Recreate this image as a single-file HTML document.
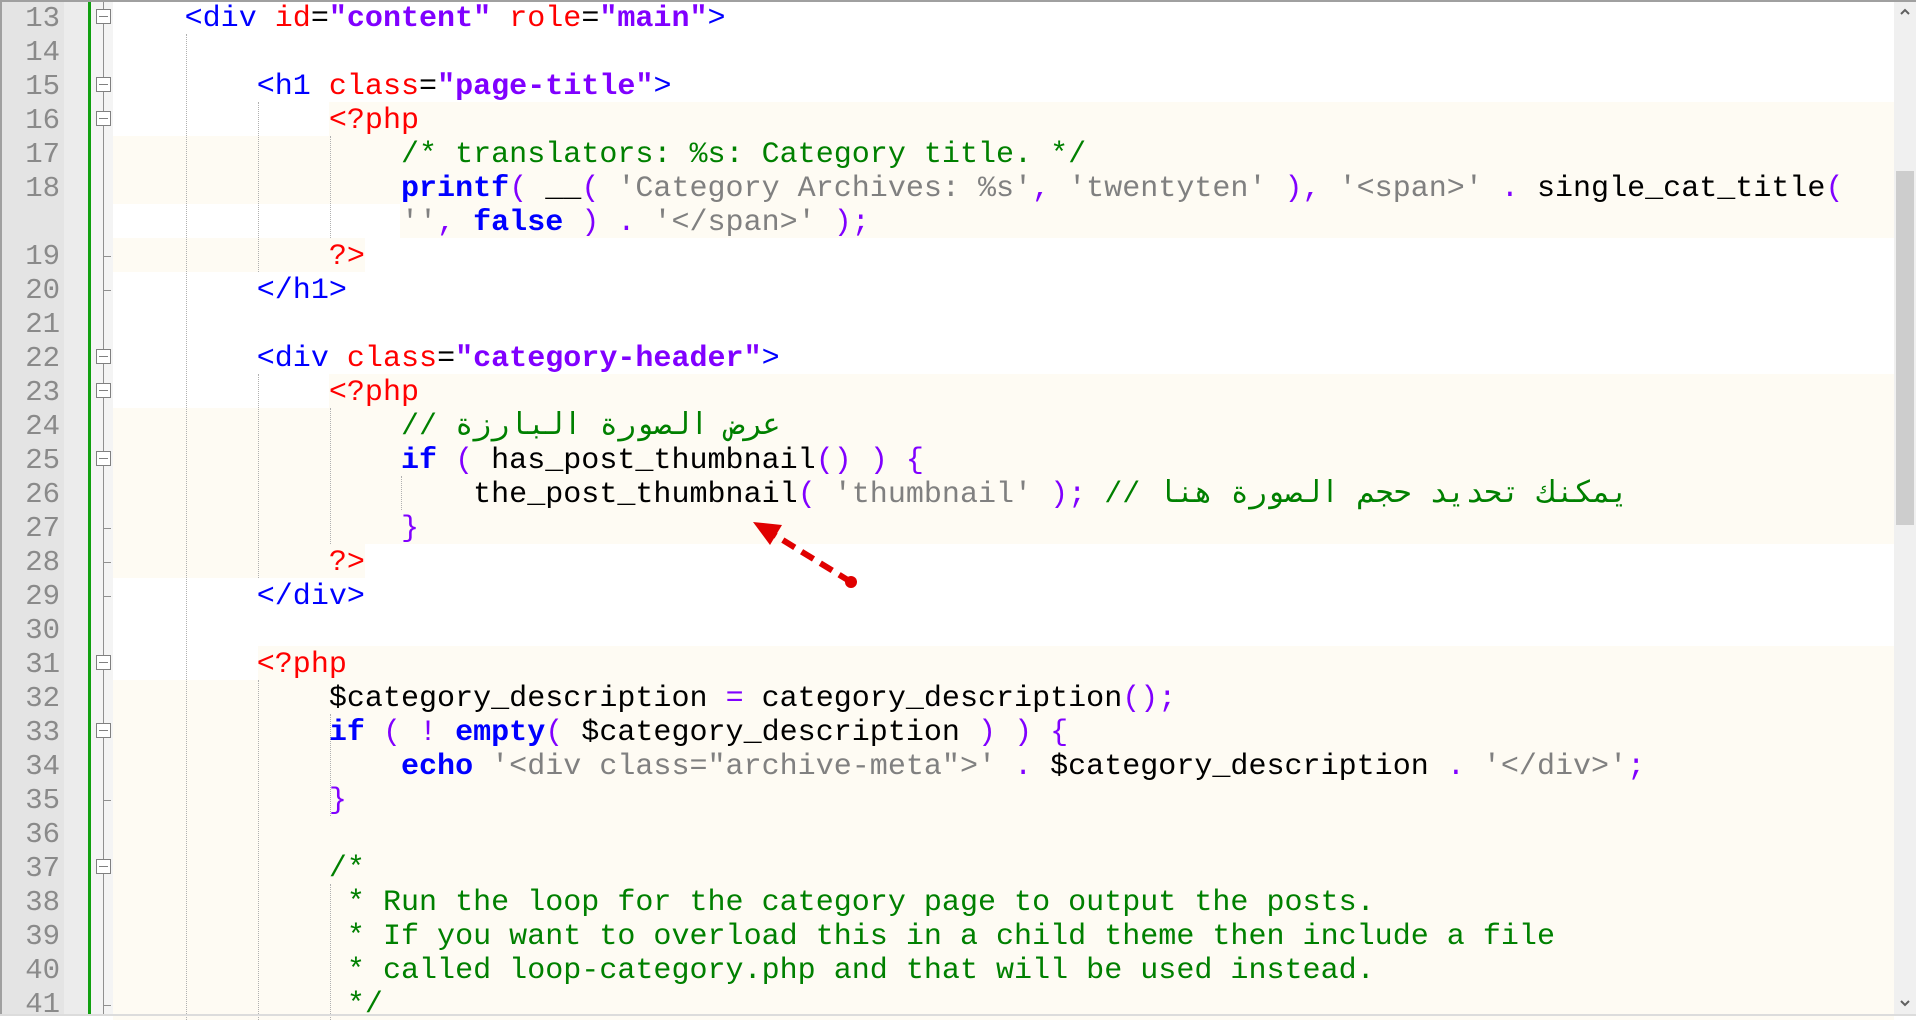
<!DOCTYPE html>
<html><head><meta charset="utf-8"><style>
*{margin:0;padding:0;box-sizing:border-box}
body{width:1916px;height:1016px;overflow:hidden;background:#fff;position:relative;font-family:"Liberation Mono","DejaVu Sans Mono",monospace}
.ln{position:absolute;left:0;top:0;width:64px;height:1016px;background:#e4e4e4}
.ln2{position:absolute;left:64px;top:0;width:24px;height:1016px;background:#ececec}
.gb{position:absolute;left:88px;top:0;width:3px;height:1016px;background:#10a010}
.fm{position:absolute;left:91px;top:0;width:22px;height:1016px;background:#f4f4f4}
.fl{position:absolute;left:103px;top:0;width:1px;height:1016px;background:#909090}
.num{position:absolute;left:0;width:60px;text-align:right;font-size:29px;line-height:34px;color:#8a8a8a;margin-top:2px}
.bg{position:absolute;height:34px;background:#fefbf3}
.row{position:absolute;left:112.5px;white-space:pre;font-size:30.05px;line-height:34px;color:#000;margin-top:2px}
.g{position:absolute;width:0;border-left:1px dotted #b0b0b0;height:34px}
.fb{position:absolute;left:96px;width:15px;height:15px;border:1px solid #808080;background:#fff}
.fb:after{content:"";position:absolute;left:2px;right:2px;top:6px;height:1px;background:#808080}
.fe{position:absolute;left:103px;width:8px;height:1px;background:#909090}
.t{color:#0000ff}.a{color:#ff0000}.v{color:#8000ff;font-weight:bold}.p{color:#ff0000}.c{color:#008000}.s{color:#808080}.k{color:#0000ff;font-weight:bold}.o{color:#8000ff}
</style></head><body>
<div class="ln"></div><div class="ln2"></div><div class="gb"></div><div class="fm"></div><div class="fl"></div>

<div class="bg" style="top:102px;left:329px;width:1565px"></div>
<div class="bg" style="top:136px;left:113px;width:1781px;height:68px"></div>
<div class="bg" style="top:204px;left:400px;width:1494px"></div>
<div class="bg" style="top:238px;left:113px;width:252px"></div>
<div class="bg" style="top:374px;left:329px;width:1565px"></div>
<div class="bg" style="top:408px;left:113px;width:1781px;height:136px"></div>
<div class="bg" style="top:544px;left:113px;width:252px"></div>
<div class="bg" style="top:646px;left:258px;width:1636px"></div>
<div class="bg" style="top:680px;left:113px;width:1781px;height:340px"></div>

<div class="g" style="left:186px;top:34px;height:986px"></div>
<div class="g" style="left:258px;top:102px;height:170px"></div>
<div class="g" style="left:258px;top:374px;height:204px"></div>
<div class="g" style="left:258px;top:680px;height:340px"></div>
<div class="g" style="left:330px;top:136px;height:102px"></div>
<div class="g" style="left:330px;top:408px;height:136px"></div>
<div class="g" style="left:330px;top:714px;height:102px"></div>
<div class="g" style="left:330px;top:884px;height:136px"></div>
<div class="g" style="left:401px;top:476px;height:34px"></div>

<div class="fb" style="top:9px"></div><div class="fb" style="top:77px"></div><div class="fb" style="top:111px"></div>
<div class="fb" style="top:349px"></div><div class="fb" style="top:383px"></div><div class="fb" style="top:451px"></div>
<div class="fb" style="top:655px"></div><div class="fb" style="top:723px"></div><div class="fb" style="top:859px"></div>
<div class="fe" style="top:256px"></div><div class="fe" style="top:290px"></div><div class="fe" style="top:528px"></div>
<div class="fe" style="top:562px"></div><div class="fe" style="top:596px"></div><div class="fe" style="top:800px"></div><div class="fe" style="top:1005px"></div>

<div class="num" style="top:0">13</div><div class="num" style="top:34px">14</div><div class="num" style="top:68px">15</div>
<div class="num" style="top:102px">16</div><div class="num" style="top:136px">17</div><div class="num" style="top:170px">18</div>
<div class="num" style="top:238px">19</div><div class="num" style="top:272px">20</div><div class="num" style="top:306px">21</div>
<div class="num" style="top:340px">22</div><div class="num" style="top:374px">23</div><div class="num" style="top:408px">24</div>
<div class="num" style="top:442px">25</div><div class="num" style="top:476px">26</div><div class="num" style="top:510px">27</div>
<div class="num" style="top:544px">28</div><div class="num" style="top:578px">29</div><div class="num" style="top:612px">30</div>
<div class="num" style="top:646px">31</div><div class="num" style="top:680px">32</div><div class="num" style="top:714px">33</div>
<div class="num" style="top:748px">34</div><div class="num" style="top:782px">35</div><div class="num" style="top:816px">36</div>
<div class="num" style="top:850px">37</div><div class="num" style="top:884px">38</div><div class="num" style="top:918px">39</div>
<div class="num" style="top:952px">40</div><div class="num" style="top:986px">41</div>

<div class="row" style="top:0">    <span class="t">&lt;div</span> <span class="a">id</span>=<span class="v">"content"</span> <span class="a">role</span>=<span class="v">"main"</span><span class="t">&gt;</span></div>
<div class="row" style="top:68px">        <span class="t">&lt;h1</span> <span class="a">class</span>=<span class="v">"page-title"</span><span class="t">&gt;</span></div>
<div class="row" style="top:102px">            <span class="p">&lt;?php</span></div>
<div class="row" style="top:136px">                <span class="c">/* translators: %s: Category title. */</span></div>
<div class="row" style="top:170px">                <span class="k">printf</span><span class="o">(</span> __<span class="o">(</span> <span class="s">'Category Archives: %s'</span><span class="o">,</span> <span class="s">'twentyten'</span> <span class="o">),</span> <span class="s">'&lt;span&gt;'</span> <span class="o">.</span> single_cat_title<span class="o">(</span></div>
<div class="row" style="top:204px">                <span class="s">''</span><span class="o">,</span> <span class="k">false</span> <span class="o">)</span> <span class="o">.</span> <span class="s">'&lt;/span&gt;'</span> <span class="o">);</span></div>
<div class="row" style="top:238px">            <span class="p">?&gt;</span></div>
<div class="row" style="top:272px">        <span class="t">&lt;/h1&gt;</span></div>
<div class="row" style="top:340px">        <span class="t">&lt;div</span> <span class="a">class</span>=<span class="v">"category-header"</span><span class="t">&gt;</span></div>
<div class="row" style="top:374px">            <span class="p">&lt;?php</span></div>
<div class="row" style="top:408px">                <span class="c">// عرض الصورة البارزة</span></div>
<div class="row" style="top:442px">                <span class="k">if</span> <span class="o">(</span> has_post_thumbnail<span class="o">()</span> <span class="o">)</span> <span class="o">{</span></div>
<div class="row" style="top:476px">                    the_post_thumbnail<span class="o">(</span> <span class="s">'thumbnail'</span> <span class="o">);</span> <span class="c">// يمكنك تحديد حجم الصورة هنا</span></div>
<div class="row" style="top:510px">                <span class="o">}</span></div>
<div class="row" style="top:544px">            <span class="p">?&gt;</span></div>
<div class="row" style="top:578px">        <span class="t">&lt;/div&gt;</span></div>
<div class="row" style="top:646px">        <span class="p">&lt;?php</span></div>
<div class="row" style="top:680px">            $category_description <span class="o">=</span> category_description<span class="o">();</span></div>
<div class="row" style="top:714px">            <span class="k">if</span> <span class="o">(</span> <span class="o">!</span> <span class="k">empty</span><span class="o">(</span> $category_description <span class="o">)</span> <span class="o">)</span> <span class="o">{</span></div>
<div class="row" style="top:748px">                <span class="k">echo</span> <span class="s">'&lt;div class="archive-meta"&gt;'</span> <span class="o">.</span> $category_description <span class="o">.</span> <span class="s">'&lt;/div&gt;'</span><span class="o">;</span></div>
<div class="row" style="top:782px">            <span class="o">}</span></div>
<div class="row" style="top:850px">            <span class="c">/*</span></div>
<div class="row" style="top:884px">             <span class="c">* Run the loop for the category page to output the posts.</span></div>
<div class="row" style="top:918px">             <span class="c">* If you want to overload this in a child theme then include a file</span></div>
<div class="row" style="top:952px">             <span class="c">* called loop-category.php and that will be used instead.</span></div>
<div class="row" style="top:986px">             <span class="c">*/</span></div>

<svg style="position:absolute;left:0;top:0" width="1916" height="1016">
<line x1="851" y1="582" x2="768" y2="531" stroke="#e00000" stroke-width="6" stroke-dasharray="14,8"/>
<circle cx="851" cy="582" r="6" fill="#e00000"/>
<polygon points="753,522 782,525 770,545" fill="#e00000"/>
</svg>

<div style="position:absolute;left:1894px;top:0;width:22px;height:1016px;background:#f0f0f0"></div>
<div style="position:absolute;left:1896px;top:171px;width:18px;height:354px;background:#cdcdcd"></div>
<svg style="position:absolute;left:1894px;top:0" width="22" height="1016">
<polyline points="7,14 11,10 15,14" fill="none" stroke="#606060" stroke-width="2"/>
<polyline points="7,1001 11,1005 15,1001" fill="none" stroke="#606060" stroke-width="2"/>
</svg>

<div style="position:absolute;left:0;top:0;width:1916px;height:2px;background:#a0a0a0"></div>
<div style="position:absolute;left:0;top:0;width:2px;height:1016px;background:#a0a0a0"></div>
<div style="position:absolute;left:0;top:1014px;width:1916px;height:2px;background:#dcdcdc"></div>
</body></html>
